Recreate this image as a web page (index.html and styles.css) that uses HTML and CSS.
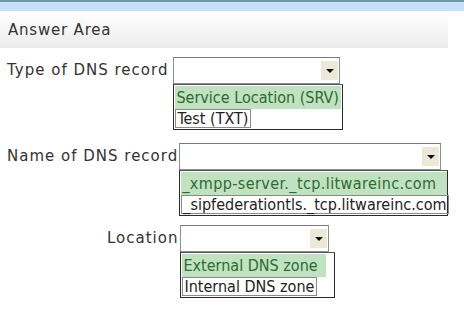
FILE: index.html
```html
<!DOCTYPE html>
<html lang="en">
<head>
    <meta charset="UTF-8">
    <title>Answer Area</title>
    <link rel="stylesheet" href="styles.css">
</head>
<body>
    <div class="topbar"></div>
    <div class="answer-head">Answer Area</div>

    <div class="answer-body">
        <div class="field row-type">
            <span class="field-label">Type of DNS record</span>
            <div class="pick">
                <div class="select select-type"><span class="arrow"></span></div>
                <ul class="options options-type">
                    <li class="chosen">Service Location (SRV)</li>
                    <li class="boxed">Test (TXT)</li>
                </ul>
            </div>
        </div>

        <div class="field row-name">
            <span class="field-label">Name of DNS record</span>
            <div class="pick">
                <div class="select select-name"><span class="arrow"></span></div>
                <ul class="options options-name">
                    <li class="chosen">_xmpp-server._tcp.litwareinc.com</li>
                    <li class="boxed">_sipfederationtls._tcp.litwareinc.com</li>
                </ul>
            </div>
        </div>

        <div class="field row-location">
            <span class="field-label">Location</span>
            <div class="pick">
                <div class="select select-location"><span class="arrow"></span></div>
                <ul class="options options-location">
                    <li class="chosen">External DNS zone</li>
                    <li class="boxed">Internal DNS zone</li>
                </ul>
            </div>
        </div>
    </div>
</body>
</html>
```

FILE: styles.css
```css
body {
    margin: 0;
    padding: 0;
    background-color: #fff;
    color: #333;
    font-family: 'DejaVu Sans', Verdana, sans-serif;
    font-size: 15px;
    letter-spacing: 1px;
    overflow: hidden;
}

.topbar {
    height: 9px;
    border-top: 2px solid #6d98a6;
    background-color: #c6e0f7;
    margin-bottom: 2px;
}

.answer-head {
    width: 440px;
    height: 35px;
    line-height: 35px;
    padding-left: 8px;
    background: linear-gradient(#fefefe, #ebebeb);
    letter-spacing: 0.8px;
    color: #333;
}

.answer-body {
    padding-top: 9px;
}

.field {
    display: flex;
    align-items: flex-start;
}

.field-label {
    line-height: 27px;
    padding-right: 2px;
}

.row-type {
    padding-left: 7px;
}

.row-type .field-label {
    padding-right: 5px;
}

.row-name {
    padding-left: 7px;
    margin-top: 13px;
}

.row-name .field-label {
    padding-right: 1px;
}

.row-location {
    padding-left: 107px;
    margin-top: 9px;
}

.pick {
    display: flex;
    flex-direction: column;
}

.select {
    box-sizing: border-box;
    height: 27px;
    border: 1px solid #8e8e8e;
    border-top-color: #7a7a7a;
    background-color: #fff;
    display: flex;
    justify-content: flex-end;
    align-items: center;
    padding-right: 1px;
}

.select-type {
    width: 167px;
}

.select-name {
    width: 262px;
}

.select-location {
    width: 149px;
}

.arrow {
    width: 17px;
    height: 19px;
    background-color: #ece9d8;
    position: relative;
}

.arrow::after {
    content: '';
    position: absolute;
    left: 5px;
    top: 8px;
    border-left: 4px solid transparent;
    border-right: 4px solid transparent;
    border-top: 4px solid #111;
}

.options {
    list-style: none;
    margin: 0;
    padding: 1px 0 1px 1px;
    border: 1px solid #2b2b2b;
    border-top-color: #555;
    font-family: 'DejaVu Sans Condensed', 'DejaVu Sans', sans-serif;
    font-size: 16px;
    letter-spacing: 0;
}

.options li {
    padding: 0 2px 0 1px;
    white-space: nowrap;
}

.options .chosen {
    background-color: #c0e2c0;
    color: #2f6a30;
    height: 23px;
    line-height: 23px;
}

.options .boxed {
    align-self: flex-start;
    display: inline-block;
    border: 1px solid #8a8a8a;
    line-height: 17px;
    color: #222;
}

.options-type {
    width: 167px;
}

.options-type .chosen {
    width: max-content;
}

.options-name {
    width: 266px;
}

.options-name .chosen {
    letter-spacing: 0.4px;
}

.options-location {
    width: 152px;
}

.options-location .chosen {
    margin-right: 8px;
}
```
